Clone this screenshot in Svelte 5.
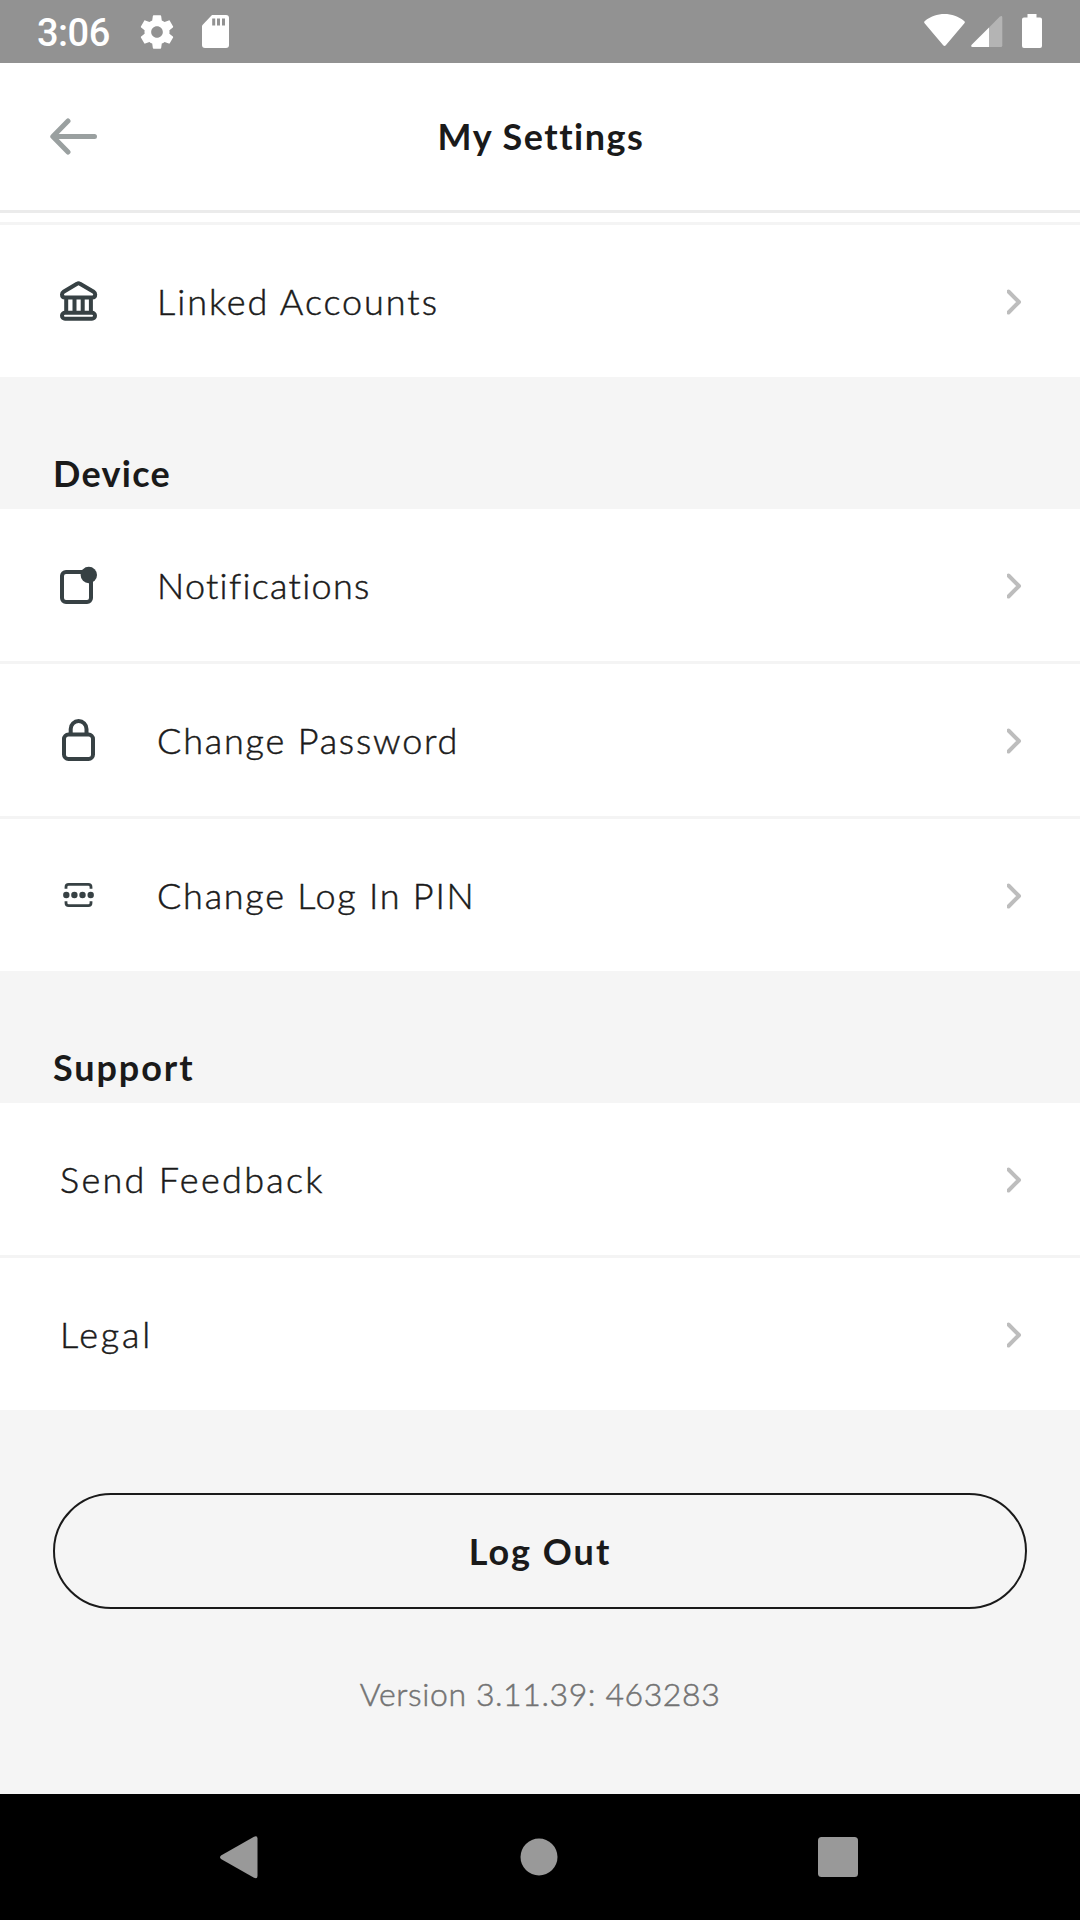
<script>
  // tracking is the letter spacing of each label in pixels
  const groups = [
    {
      title: null,
      rows: [{ label: 'Linked Accounts', icon: 'bank', tracking: 1.95 }]
    },
    {
      title: 'Device',
      tracking: 1.3,
      rows: [
        { label: 'Notifications', icon: 'notification', tracking: 1.3 },
        { label: 'Change Password', icon: 'lock', tracking: 1.8 },
        { label: 'Change Log In PIN', icon: 'pin', tracking: 1.75 }
      ]
    },
    {
      title: 'Support',
      tracking: 1.9,
      rows: [
        { label: 'Send Feedback', icon: null, tracking: 2.3 },
        { label: 'Legal', icon: null, tracking: 2.8 }
      ]
    }
  ];
</script>

<div class="screen">
  <div class="status">
    <span class="clock">3:06</span>
    <svg class="gear" width="40" height="40" viewBox="0 0 24 24" fill="#fff">
      <path d="M19.43 12.98c.04-.32.07-.64.07-.98s-.03-.66-.07-.98l2.11-1.65c.19-.15.24-.42.12-.64l-2-3.46c-.12-.22-.39-.3-.61-.22l-2.49 1c-.52-.4-1.08-.73-1.69-.98l-.38-2.65C14.46 2.18 14.25 2 14 2h-4c-.25 0-.46.18-.49.42l-.38 2.65c-.61.25-1.17.59-1.69.98l-2.49-1c-.23-.09-.49 0-.61.22l-2 3.46c-.13.22-.07.49.12.64l2.11 1.65c-.04.32-.07.65-.07.98s.03.66.07.98l-2.11 1.65c-.19.15-.24.42-.12.64l2 3.46c.12.22.39.3.61.22l2.49-1c.52.4 1.08.73 1.69.98l.38 2.65c.03.24.24.42.49.42h4c.25 0 .46-.18.49-.42l.38-2.65c.61-.25 1.17-.59 1.69-.98l2.49 1c.23.09.49 0 .61-.22l2-3.46c.12-.22.07-.49-.12-.64l-2.11-1.65zM12 15.5c-1.93 0-3.5-1.57-3.5-3.5s1.57-3.5 3.5-3.5 3.5 1.57 3.5 3.5-1.57 3.5-3.5 3.5z" />
    </svg>
    <svg class="sd" width="27" height="33" viewBox="0 0 27 33">
      <path d="M10 0H24a3 3 0 0 1 3 3V30a3 3 0 0 1-3 3H3a3 3 0 0 1-3-3V10.500z" fill="#fff" />
      <path d="M11.700 3.500v7M16.500 3.500v7M21.500 3.500v7" stroke="#929292" stroke-width="3" />
    </svg>
    <span class="spacer"></span>
    <svg class="wifi" width="41" height="32" viewBox="0 0 41 32">
      <path d="M.6 9.200Q-.4 8 .9 7C12-2.300 29-2.300 40.100 7q1.300 1 .3 2.200L21.800 31.200q-1.300 1.400-2.600 0z" fill="#fff" />
    </svg>
    <svg class="signal" width="32" height="31" viewBox="0 0 32 31">
      <path d="M18 11.500L28.700.7Q31.300-1 31.300 1.500V29.500q0 1.500-1.500 1.500H18z" fill="#b4b4b4" />
      <path d="M18 11.500V31H1.500q-2.200-.4-.8-2.300z" fill="#fff" />
    </svg>
    <svg class="battery" width="20" height="34" viewBox="0 0 20 34">
      <path d="M5.500 0h9v3.500h3.500a2 2 0 0 1 2 2V32a2 2 0 0 1-2 2H2a2 2 0 0 1-2-2V5.500a2 2 0 0 1 2-2h3.500z" fill="#fff" />
    </svg>
  </div>

  <header>
    <svg class="back" width="48" height="38" viewBox="50 118 48 38" fill="none" stroke="#9aa0a0" stroke-width="5" stroke-linecap="round" stroke-linejoin="round">
      <path d="M68 121L52.800 136.500L68 152M53.500 136.500H94.500" />
    </svg>
    <h1>My Settings</h1>
  </header>

  <main>
    {#each groups as group}
      {#if group.title}
        <h2 style:letter-spacing="{group.tracking}px">{group.title}</h2>
      {/if}
      <ul class:continued={!group.title}>
        {#each group.rows as row}
          <li>
            {#if row.icon === 'bank'}
              <svg class="icon" width="49" height="48" viewBox="54 277 49 48">
                <path d="M77 283.800q1.500-1 3 0l13.600 8q1.600 1 1.600 2.700 0 3-3 3H65q-3 0-3-3 0-1.700 1.600-2.700zM66.200 298v14M74.500 298v14M82.700 298v14M90.900 298v14" />
                <rect x="62" y="312.800" width="33" height="6" rx="3" />
              </svg>
            {:else if row.icon === 'notification'}
              <svg class="icon" width="49" height="48" viewBox="54 561 49 48">
                <rect x="62" y="572" width="29" height="30" rx="4" />
                <circle class="solid" cx="88.800" cy="575" r="8.200" />
              </svg>
            {:else if row.icon === 'lock'}
              <svg class="icon" width="49" height="48" viewBox="54 716 49 48">
                <rect x="64" y="734.500" width="29" height="24.500" rx="4.500" />
                <path d="M70.700 734v-5a7.900 7.900 0 0 1 15.800 0v5" />
              </svg>
            {:else if row.icon === 'pin'}
              <svg class="icon thin" width="49" height="48" viewBox="54 871 49 48">
                <path d="M66 888.800v-1.800q0-2.700 2.700-2.700H88.300q2.700 0 2.700 2.700v1.800M66 901.200v1.800q0 2.700 2.700 2.700H88.300q2.700 0 2.700-2.700v-1.800" />
                <circle class="solid" cx="66.300" cy="895" r="3.200" />
                <circle class="solid" cx="74.400" cy="895" r="3.200" />
                <circle class="solid" cx="82.500" cy="895" r="3.200" />
                <circle class="solid" cx="90.700" cy="895" r="3.200" />
              </svg>
            {/if}
            <span class="label" style:letter-spacing="{row.tracking}px">{row.label}</span>
            <svg class="chevron" width="16" height="26" viewBox="0 0 16 26">
              <path d="M1.500 2.500L12 13L1.500 23.500" />
            </svg>
          </li>
        {/each}
      </ul>
    {/each}

    <button>Log Out</button>
    <p class="version">Version 3.11.39: 463283</p>
  </main>

  <nav>
    <svg width="38" height="43" viewBox="0 0 38 43">
      <path d="M1 19.500L34 .8q3.500-1.500 3.500 1.700V40q0 3.200-3.500 1.700L1 23q-2-1.700 0-3.500z" />
    </svg>
    <svg class="home" width="38" height="38" viewBox="0 0 38 38"><circle cx="19" cy="19" r="18.500" /></svg>
    <svg width="40" height="40" viewBox="0 0 40 40"><rect width="40" height="40" rx="3.500" /></svg>
  </nav>
</div>

<style>
  :global(body) {
    margin: 0;
  }
  .screen {
    display: flex;
    flex-direction: column;
    width: 1080px;
    height: 1920px;
    overflow: hidden;
    background: #f5f5f5;
    color: #1a1a1a;
    font-family: Lato, 'Liberation Sans', sans-serif;
  }
  svg {
    display: block;
    flex: none;
  }

  .status {
    box-sizing: border-box;
    display: flex;
    align-items: flex-start;
    height: 63px;
    padding: 14px 38px 0 37px;
    background: #929292;
  }
  .clock {
    width: 100px;
    padding-top: 1px;
    font: 500 38px/36px Roboto, sans-serif;
    letter-spacing: -0.5px;
    color: #fff;
  }
  .gear {
    margin-top: -2px;
  }
  .sd {
    margin: 1px 0 0 25px;
  }
  .spacer {
    flex: 1;
  }
  .signal {
    margin: 2px 19px 0 6px;
  }

  header {
    box-sizing: border-box;
    display: grid;
    grid-template-columns: 48px 1fr 48px;
    align-items: center;
    height: 150px;
    padding: 0 50px;
    border-bottom: 3px solid #ebebeb;
    background: #fff;
  }
  h1 {
    margin: 0;
    padding: 0 0 2px 2px;
    font-size: 36px;
    font-weight: 700;
    line-height: 44px;
    letter-spacing: 1.5px;
    text-align: center;
  }

  main {
    display: flex;
    flex-direction: column;
    flex: 1;
  }
  h2 {
    box-sizing: border-box;
    height: 132px;
    margin: 0;
    padding: 74px 53px 0;
    font-size: 36px;
    font-weight: 700;
    line-height: 44px;
  }
  ul {
    margin: 0;
    padding: 0;
    list-style: none;
  }
  .continued {
    padding-top: 9px;
    background: #fff;
  }
  .continued li,
  li + li {
    border-top: 3px solid #f4f4f4;
  }
  li {
    display: flex;
    align-items: center;
    height: 152px;
    padding: 0 57px 0 60px;
    background: #fff;
  }
  .icon {
    margin: 0 54px 0 -6px;
    fill: none;
    stroke: #374144;
    stroke-width: 4;
  }
  .thin {
    stroke-width: 2.8;
  }
  .solid {
    fill: #374144;
    stroke: none;
  }
  .label {
    flex: 1;
    font-size: 36px;
    font-weight: 300;
    line-height: 44px;
    -webkit-text-stroke: 0.5px #1a1a1a;
  }
  .chevron {
    margin-top: 2px;
    fill: none;
    stroke: #bdbdbd;
    stroke-width: 4;
    stroke-linecap: round;
    stroke-linejoin: round;
  }

  button {
    height: 116px;
    margin: 83px 53px 0;
    padding: 0;
    border: 2px solid #1a1a1a;
    border-radius: 58px;
    background: transparent;
    color: inherit;
    font: 700 36px/44px Lato, 'Liberation Sans', sans-serif;
    letter-spacing: 2px;
  }
  .version {
    margin: 65px 0 0;
    font-size: 32px;
    font-weight: 300;
    line-height: 40px;
    letter-spacing: 0.6px;
    text-align: center;
    color: #737373;
    -webkit-text-stroke: 0.5px #737373;
  }

  nav {
    box-sizing: border-box;
    display: flex;
    align-items: center;
    justify-content: space-between;
    height: 126px;
    padding: 0 222px 0 220px;
    background: #000;
    fill: #999;
  }
  .home {
    margin: 0 -1px 1px 1px;
  }
</style>
